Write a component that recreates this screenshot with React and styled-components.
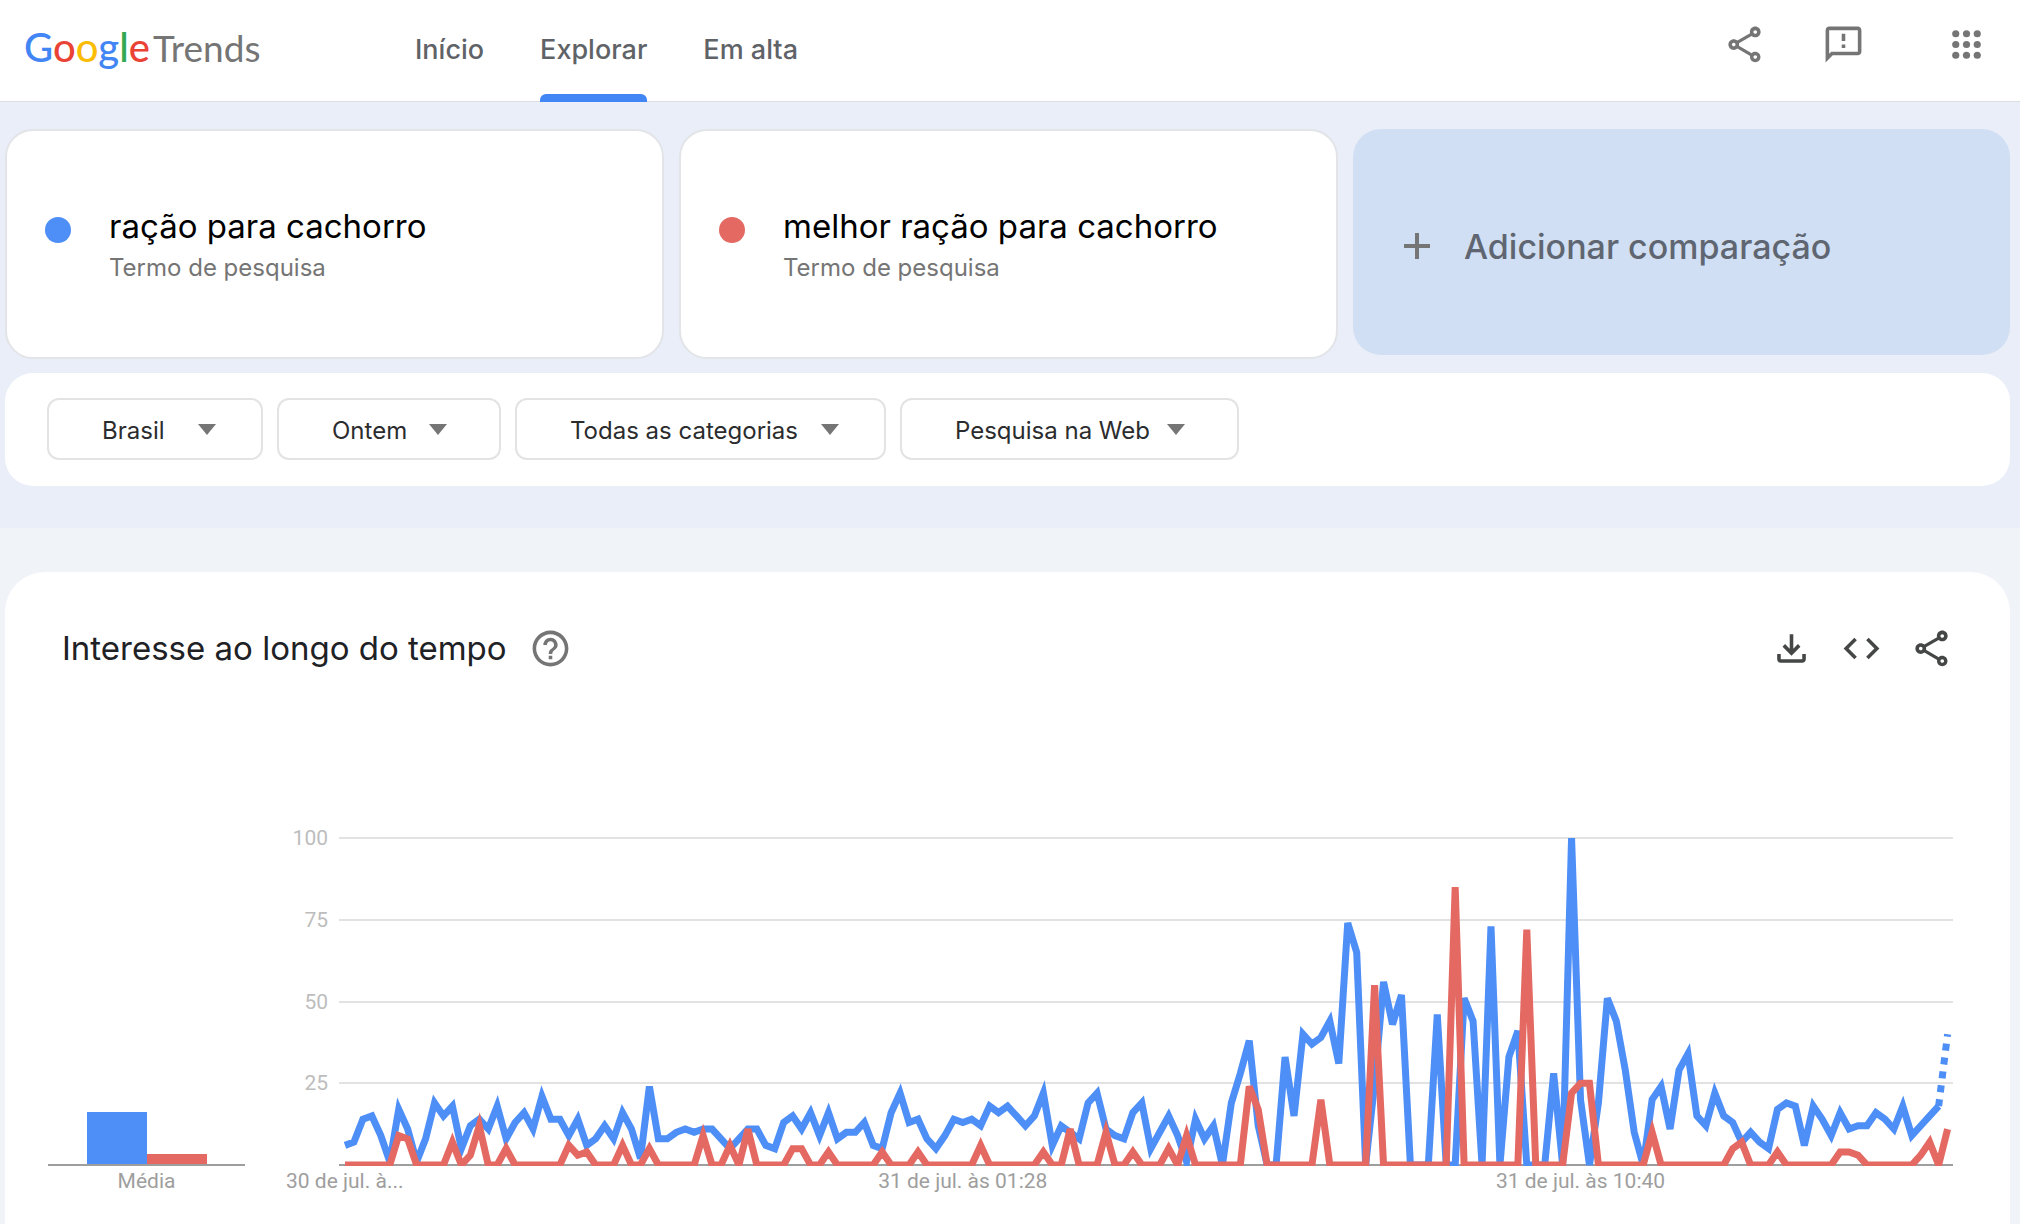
import { useState } from "react";

import styled, { createGlobalStyle } from "styled-components";
import {
  MdCode,
  MdHelpOutline,
  MdOutlineFeedback,
  MdOutlineShare,
} from "react-icons/md";

const BLUE = "#4d8ef7";
const RED = "#e46962";

const GlobalStyle = createGlobalStyle`
  * {
    box-sizing: border-box;
  }

  body {
    margin: 0;
    background-color: #f0f4f9;
    font-family: Inter, "Open Sans", sans-serif;
    color: #202124;
  }
`;

const Page = styled.div`
  display: flex;
  flex-direction: column;
  min-height: 100vh;
`;

const Header = styled.header`
  display: flex;
  height: 102px;
  padding: 0 32px 0 24px;
  background-color: white;
  border-bottom: 1px solid #dcdee2;
`;

const Logo = styled.a`
  display: flex;
  align-items: center;
  width: 391px;
  padding-bottom: 8px;
  font-family: Lato, sans-serif;
  font-size: 40px;
  font-weight: 500;
  text-decoration: none;
`;

const LogoLetter = styled.span`
  color: ${(props) => props.$color};
`;

const LogoProduct = styled.span`
  padding-left: 3px;
  font-size: 37px;
  font-weight: 400;
  color: #757575;
`;

const Nav = styled.nav`
  display: flex;
  gap: 56px;
`;

const NavLink = styled.a`
  position: relative;
  display: flex;
  align-items: center;
  padding-bottom: 2px;
  font-size: 27px;
  font-weight: 500;
  color: #5f6368;
  text-decoration: none;

  &[aria-current="page"]::after {
    content: "";
    position: absolute;
    left: 0;
    right: 0;
    bottom: -1px;
    height: 8px;
    border-radius: 6px 6px 0 0;
    background-color: #4285f4;
  }
`;

const HeaderActions = styled.div`
  display: flex;
  align-items: center;
  gap: 56px;
  margin-left: auto;
  padding-bottom: 12px;
`;

const AppsBox = styled.div`
  display: flex;
  padding-left: 24px;
`;

const IconButton = styled.button`
  display: flex;
  padding: 0;
  border: none;
  background: transparent;
  color: ${(props) => props.$color || "#757575"};
  cursor: pointer;

  svg {
    width: 43px;
    height: 43px;
  }
`;

const SearchArea = styled.section`
  display: flex;
  flex-direction: column;
  gap: 14px;
  padding: 27px 10px 42px 5px;
  background-color: #e9eef8;
`;

const TermGrid = styled.div`
  display: grid;
  grid-template-columns: 659fr 659fr 657fr;
  align-items: start;
  gap: 15px;
`;

const TermCard = styled.article`
  display: flex;
  gap: 38px;
  height: 230px;
  padding: 74px 38px 0;
  border: 2px solid #e2e4e7;
  border-radius: 28px;
  background-color: white;
`;

const Dot = styled.span`
  flex: none;
  width: 26px;
  height: 26px;
  margin-top: 12px;
  border-radius: 50%;
  background-color: ${(props) => props.$color};
`;

const TermTitle = styled.h2`
  margin: 0;
  font-size: 33px;
  line-height: 42px;
  font-weight: 400;
  color: black;
`;

const TermType = styled.p`
  margin: 0;
  font-size: 24px;
  line-height: 42px;
  color: #757575;
`;

const AddButton = styled.button`
  display: flex;
  align-items: center;
  gap: 34px;
  height: 226px;
  padding: 8px 51px 0;
  border: none;
  border-radius: 28px;
  background-color: #d0dff3;
  font-family: inherit;
  font-size: 34px;
  font-weight: 500;
  color: #5f6671;
  cursor: pointer;
`;

const FilterBar = styled.div`
  display: flex;
  gap: 14px;
  padding: 25px 42px 26px;
  border-radius: 28px;
  background-color: white;
`;

const FilterBox = styled.div`
  position: relative;
  width: ${(props) => props.$width}px;
`;

const FilterSelect = styled.select`
  appearance: none;
  width: 100%;
  height: 62px;
  padding: 2px 0 0 53px;
  border: 2px solid #e3e3e3;
  border-radius: 12px;
  background-color: white;
  font-family: inherit;
  font-size: 24px;
  color: #2b2c2e;
  cursor: pointer;
`;

const FilterArrow = styled.span`
  position: absolute;
  top: 26px;
  right: ${(props) => props.$right}px;
  border: 9px solid transparent;
  border-top: 11px solid #757575;
  border-bottom: none;
  pointer-events: none;
`;

const ChartCard = styled.main`
  flex: 1;
  margin: 44px 10px 0 5px;
  padding: 55px 57px 24px 43px;
  border-radius: 40px 40px 0 0;
  background-color: white;
`;

const ChartHeader = styled.div`
  display: flex;
  align-items: center;
  gap: 22px;
  padding-left: 14px;
`;

const ChartTitle = styled.h1`
  margin: 0;
  font-size: 33px;
  line-height: 43px;
  font-weight: 400;
`;

const ChartActions = styled.div`
  display: flex;
  gap: 27px;
  margin-left: auto;
`;

const ChartRow = styled.div`
  display: flex;
  align-items: flex-end;
  gap: 41px;
  margin-top: 149px;
`;

const Average = styled.div`
  flex: none;
  width: 197px;
`;

const AverageBars = styled.div`
  display: flex;
  justify-content: center;
  align-items: flex-end;
  border-bottom: 2px solid #9e9e9e;
`;

const AverageBar = styled.div`
  width: 60px;
  background-color: ${(props) => props.$color};
`;

const AverageLabel = styled.p`
  margin: 0;
  padding-bottom: 2px;
  font-family: Roboto, sans-serif;
  font-size: 21px;
  line-height: 31px;
  text-align: center;
  color: #9e9e9e;
`;

const LineChart = styled.svg`
  display: block;
  flex: 1;
  min-width: 0;
`;

const AxisText = styled.text`
  font-family: Roboto, sans-serif;
  font-size: 21px;
  fill: ${(props) => props.$color};
  text-anchor: ${(props) => props.$anchor};
`;

const terms = [
  { name: "ração para cachorro", color: BLUE, average: 16 },
  { name: "melhor ração para cachorro", color: RED, average: 3 },
];

const filters = [
  { label: "Local", value: "Brasil", width: 216, arrow: 47 },
  { label: "Período", value: "Ontem", width: 224, arrow: 54 },
  { label: "Categoria", value: "Todas as categorias", width: 371, arrow: 47 },
  { label: "Tipo de pesquisa", value: "Pesquisa na Web", width: 339, arrow: 54 },
];

// one value every 8 minutes, the last one is still partial
const blueValues = [
  6, 7, 14, 15, 9, 1, 17, 11, 1, 8, 19, 15, 18, 5, 12, 14, 11, 18, 8, 13,
  16, 11, 21, 14, 14, 9, 14, 6, 8, 12, 8, 16, 11, 2, 24, 8, 8, 10, 11, 10,
  11, 11, 8, 5, 8, 11, 11, 6, 5, 13, 15, 11, 16, 9, 16, 8, 10, 10, 13, 6,
  5, 16, 22, 13, 14, 8, 5, 9, 14, 13, 14, 12, 18, 16, 18, 15, 12, 15, 22, 6,
  12, 10, 8, 19, 22, 11, 9, 8, 16, 19, 5, 10, 15, 9, 1, 14, 8, 12, 0, 19,
  28, 38, 12, 0, 0, 33, 15, 40, 37, 39, 44, 31, 74, 65, 0, 25, 56, 43, 52, 0,
  0, 0, 46, 0, 0, 51, 44, 0, 73, 0, 33, 41, 0, 0, 0, 28, 0, 100, 20, 0,
  19, 51, 44, 29, 10, 0, 20, 24, 11, 29, 34, 15, 12, 22, 15, 13, 7, 10, 7, 5,
  17, 19, 18, 6, 18, 14, 9, 16, 11, 12, 12, 16, 14, 11, 18, 9, 12, 15, 18, 40,
];

// only the points above zero
const redPeaks = {
  6: 9, 7: 8, 12: 7, 14: 3, 15: 12, 18: 5, 25: 6, 26: 3, 27: 4, 31: 6,
  34: 5, 40: 9, 43: 6, 45: 11, 50: 5, 51: 5, 54: 4, 60: 4, 64: 4, 71: 6,
  78: 4, 81: 11, 85: 10, 88: 4, 92: 5, 94: 9, 101: 24, 102: 17, 109: 20,
  115: 55, 124: 85, 132: 72, 137: 22, 138: 25, 139: 25, 146: 10, 155: 5,
  156: 7, 160: 4, 167: 4, 168: 4, 169: 3, 176: 3, 177: 7, 179: 11,
};
const redValues = blueValues.map((_, i) => redPeaks[i] || 0);

const gridValues = [100, 75, 50, 25];

const xAt = (i) => 59 + i * 8.953;
const yAt = (value) => 346 - value * 3.27;
const toPoints = (values, start = 0) =>
  values.map((value, i) => `${xAt(i + start)},${yAt(value)}`).join(" ");

function DownloadIcon() {
  return (
    <svg viewBox="0 0 24 24" fill="currentColor" aria-hidden="true">
      <path d="M12 16 7 11l1.4-1.45 2.6 2.6V4h2v8.15l2.6-2.6L17 11l-5 5Zm-6 4q-.825 0-1.413-.588T4 18v-3h2v3h12v-3h2v3q0 .825-.587 1.413T18 20H6Z" />
    </svg>
  );
}

function AppsIcon() {
  const spots = [6, 12, 18];

  return (
    <svg viewBox="0 0 24 24" fill="currentColor" aria-hidden="true">
      {spots.map((cy) =>
        spots.map((cx) => <circle key={`${cx}-${cy}`} cx={cx} cy={cy} r="2" />)
      )}
    </svg>
  );
}

function PlusIcon() {
  return (
    <svg width="26" height="26" viewBox="0 0 26 26" aria-hidden="true">
      <path d="M13 0v26M0 13h26" stroke="#757575" strokeWidth="4" />
    </svg>
  );
}

function TopBar() {
  return (
    <Header>
      <Logo href="#inicio" aria-label="Google Trends">
        <span>
          <LogoLetter $color="#4285f4">G</LogoLetter>
          <LogoLetter $color="#ea4335">o</LogoLetter>
          <LogoLetter $color="#fbbc05">o</LogoLetter>
          <LogoLetter $color="#4285f4">g</LogoLetter>
          <LogoLetter $color="#34a853">l</LogoLetter>
          <LogoLetter $color="#ea4335">e</LogoLetter>
          <LogoProduct>Trends</LogoProduct>
        </span>
      </Logo>
      <Nav>
        <NavLink href="#inicio">Início</NavLink>
        <NavLink href="#explorar" aria-current="page">
          Explorar
        </NavLink>
        <NavLink href="#em-alta">Em alta</NavLink>
      </Nav>
      <HeaderActions>
        <IconButton type="button" aria-label="Compartilhar">
          <MdOutlineShare />
        </IconButton>
        <IconButton type="button" aria-label="Enviar feedback">
          <MdOutlineFeedback />
        </IconButton>
        <AppsBox>
          <IconButton type="button" aria-label="Google Apps">
            <AppsIcon />
          </IconButton>
        </AppsBox>
      </HeaderActions>
    </Header>
  );
}

function Filter({ label, value, width, arrow }) {
  const [selected, setSelected] = useState(value);

  return (
    <FilterBox $width={width}>
      <FilterSelect
        aria-label={label}
        value={selected}
        onChange={(e) => setSelected(e.target.value)}
      >
        <option>{value}</option>
      </FilterSelect>
      <FilterArrow $right={arrow} />
    </FilterBox>
  );
}

function InterestChart() {
  const last = blueValues.length - 1;

  return (
    <LineChart viewBox="0 0 1667 380" role="img" aria-label="Interesse ao longo do tempo">
      <clipPath id="plot">
        <rect x="53" y="19" width="1614" height="328" />
      </clipPath>
      {gridValues.map((value) => (
        <g key={value}>
          <rect x="53" y={Math.round(yAt(value)) - 1} width="1614" height="2" fill="#e2e2e2" />
          <AxisText x="42" y={Math.round(yAt(value)) + 7} $anchor="end" $color="#bdbdbd">
            {value}
          </AxisText>
        </g>
      ))}
      <rect x="53" y="345" width="1614" height="2" fill="#9e9e9e" />
      <g clipPath="url(#plot)" fill="none" strokeWidth="7">
        <polyline points={toPoints(blueValues.slice(0, last))} stroke={BLUE} />
        <polyline
          points={toPoints(blueValues.slice(last - 1), last - 1)}
          stroke={BLUE}
          strokeDasharray="7 7"
        />
        <polyline points={toPoints(redValues)} stroke={RED} />
      </g>
      <AxisText x="0" y="369" $anchor="start" $color="#9e9e9e">
        30 de jul. à...
      </AxisText>
      <AxisText x={xAt(69)} y="369" $anchor="middle" $color="#9e9e9e">
        31 de jul. às 01:28
      </AxisText>
      <AxisText x={xAt(138)} y="369" $anchor="middle" $color="#9e9e9e">
        31 de jul. às 10:40
      </AxisText>
    </LineChart>
  );
}

function App() {
  return (
    <Page>
      <GlobalStyle />
      <TopBar />
      <SearchArea>
        <TermGrid>
          {terms.map((term) => (
            <TermCard key={term.name}>
              <Dot $color={term.color} />
              <div>
                <TermTitle>{term.name}</TermTitle>
                <TermType>Termo de pesquisa</TermType>
              </div>
            </TermCard>
          ))}
          <AddButton type="button">
            <PlusIcon />
            Adicionar comparação
          </AddButton>
        </TermGrid>
        <FilterBar>
          {filters.map((filter) => (
            <Filter key={filter.label} {...filter} />
          ))}
        </FilterBar>
      </SearchArea>
      <ChartCard>
        <ChartHeader>
          <ChartTitle>Interesse ao longo do tempo</ChartTitle>
          <IconButton type="button" aria-label="Ajuda">
            <MdHelpOutline />
          </IconButton>
          <ChartActions>
            <IconButton type="button" aria-label="Baixar CSV" $color="#444746">
              <DownloadIcon />
            </IconButton>
            <IconButton type="button" aria-label="Incorporar" $color="#444746">
              <MdCode />
            </IconButton>
            <IconButton type="button" aria-label="Compartilhar gráfico" $color="#444746">
              <MdOutlineShare />
            </IconButton>
          </ChartActions>
        </ChartHeader>
        <ChartRow>
          <Average>
            <AverageBars>
              {terms.map((term) => (
                <AverageBar
                  key={term.name}
                  $color={term.color}
                  style={{ height: Math.round(term.average * 3.27) }}
                />
              ))}
            </AverageBars>
            <AverageLabel>Média</AverageLabel>
          </Average>
          <InterestChart />
        </ChartRow>
      </ChartCard>
    </Page>
  );
}

export default App;
